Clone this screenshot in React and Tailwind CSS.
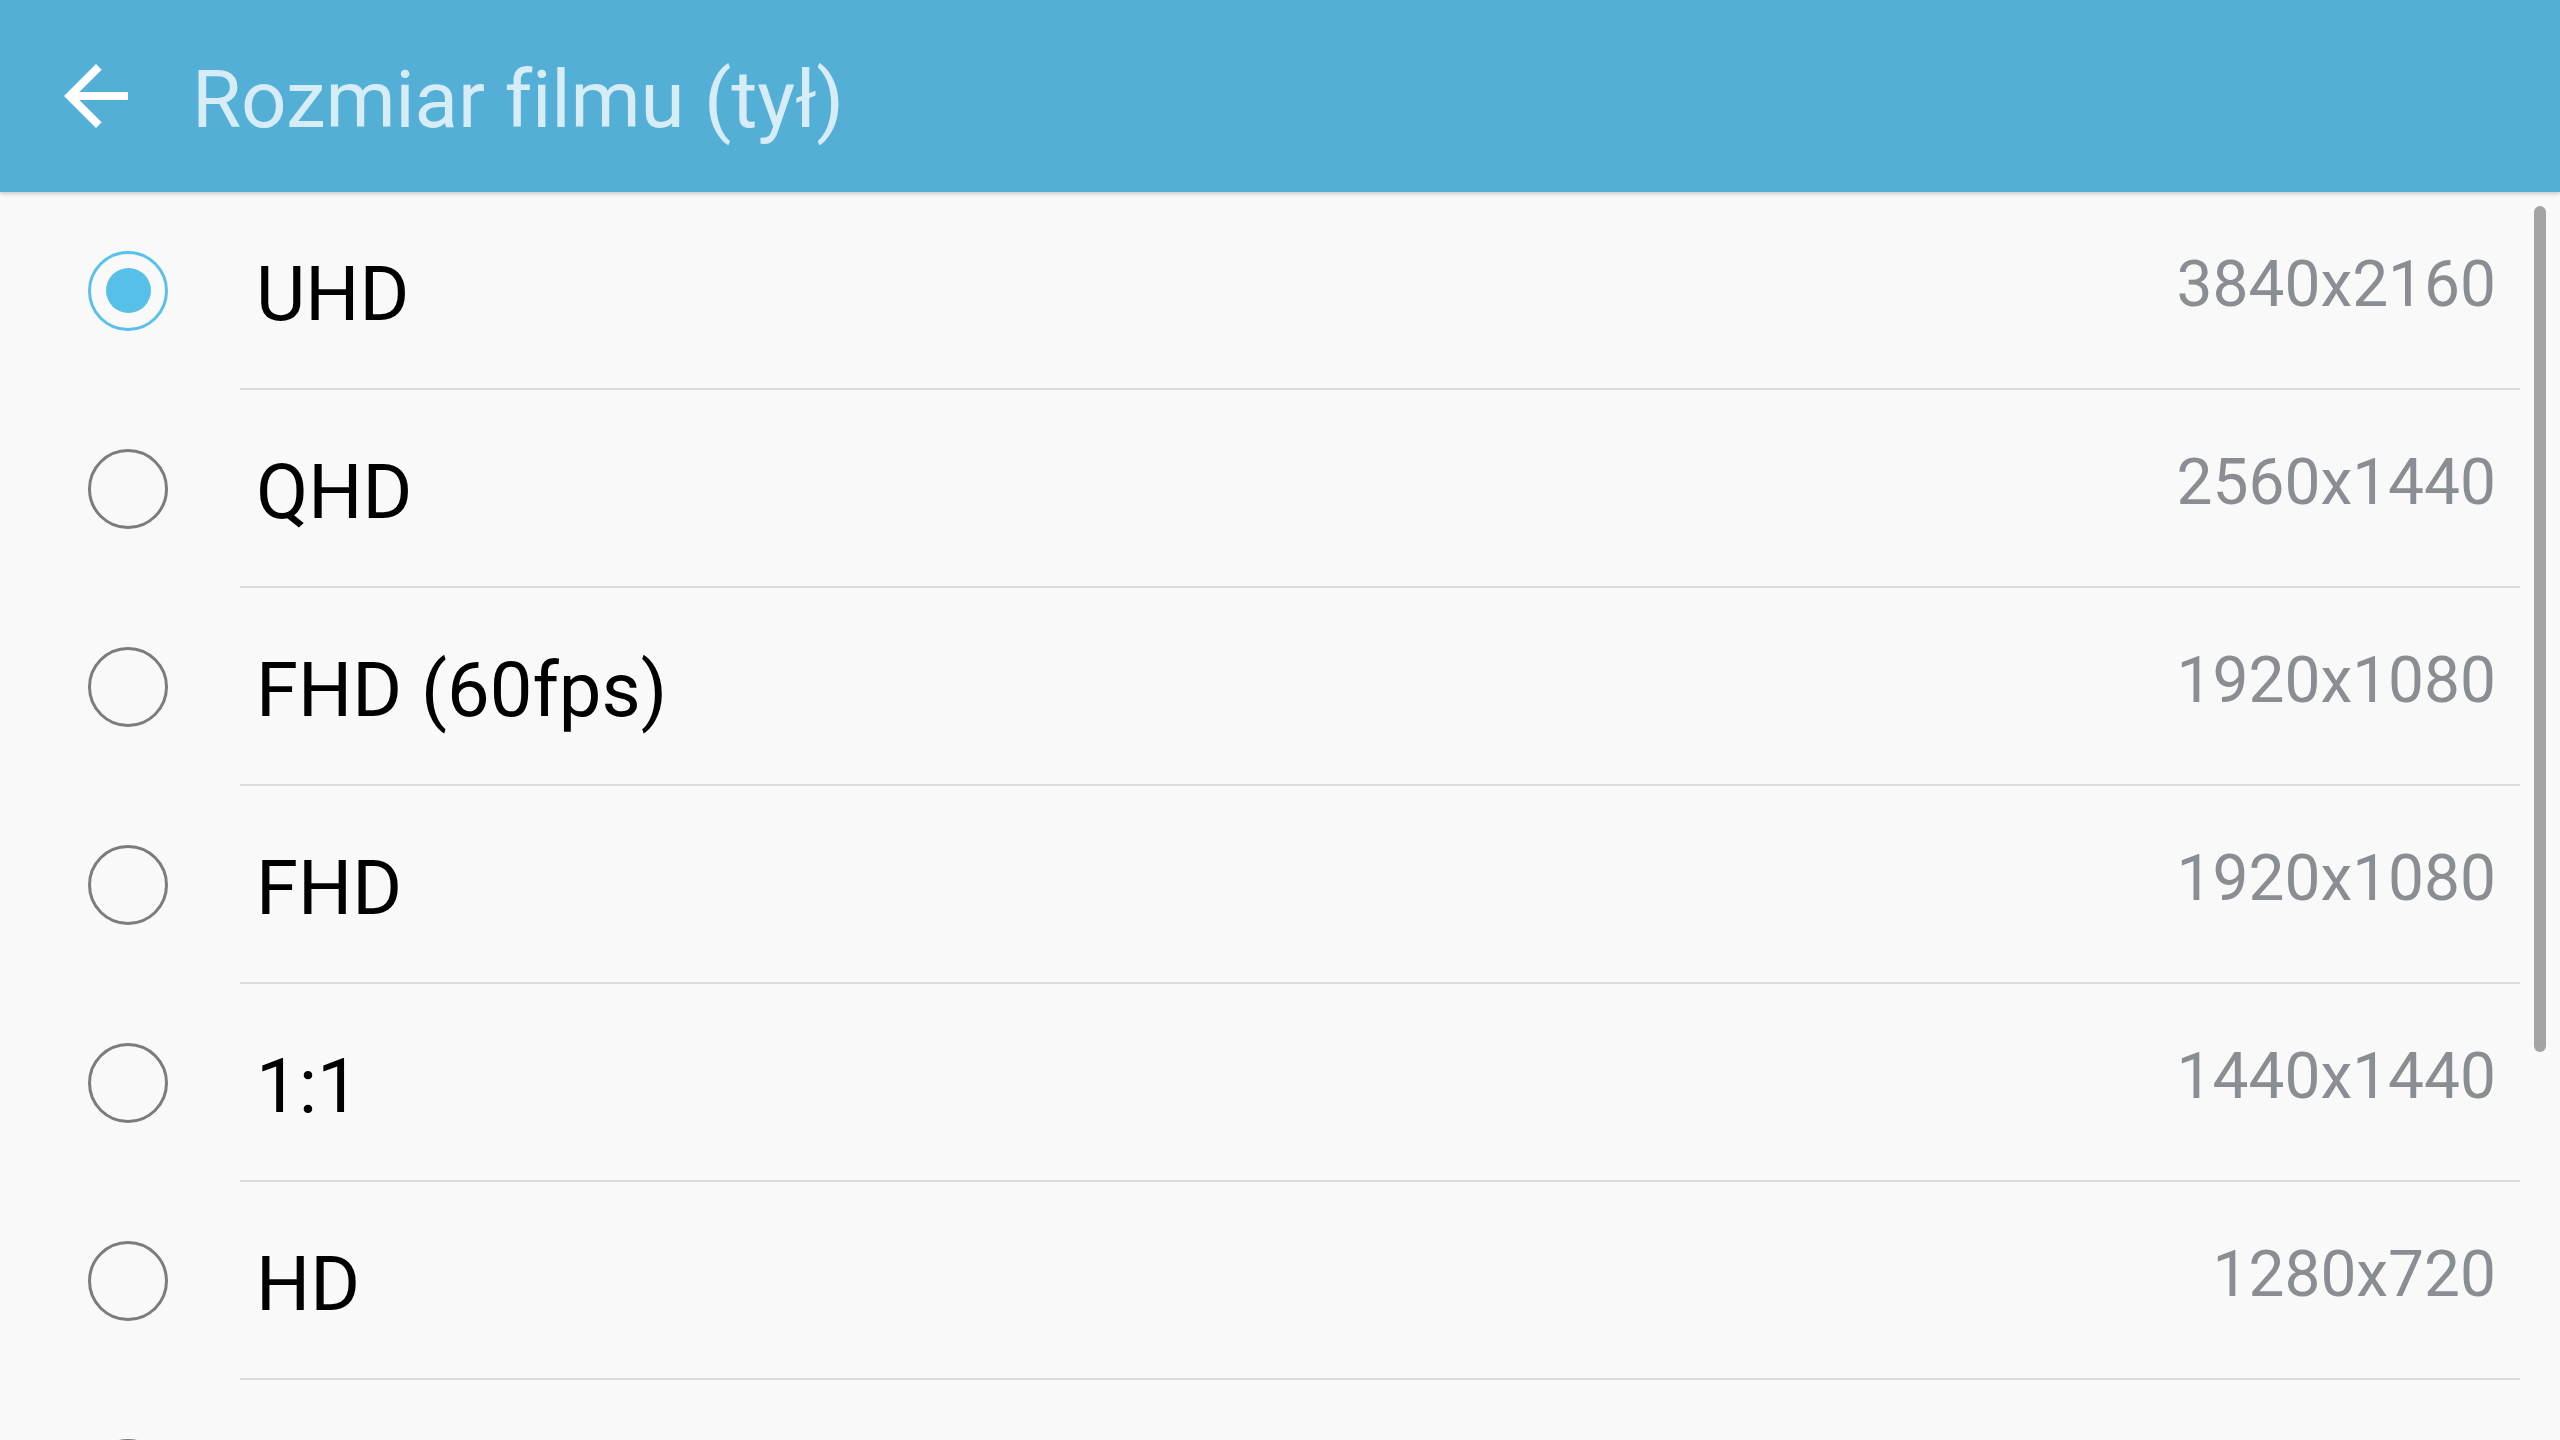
import React from "react";

const rows = [
  { label: "UHD", value: "3840x2160", selected: true },
  { label: "QHD", value: "2560x1440" },
  { label: "FHD (60fps)", value: "1920x1080" },
  { label: "FHD", value: "1920x1080" },
  { label: "1:1", value: "1440x1440" },
  { label: "HD", value: "1280x720" },
  { label: "", value: "" },
];

function Radio({ selected }) {
  if (selected) {
    return (
      <div className="w-[80px] h-[80px] rounded-full border-[3px] border-[#5bc1e8] flex items-center justify-center">
        <div className="w-[45px] h-[45px] rounded-full bg-[#56c0e8]" />
      </div>
    );
  }
  return <div className="w-[80px] h-[80px] rounded-full border-[3px] border-[#7c7c7c]" />;
}

export default function App() {
  return (
    <div
      className="w-[2560px] h-[1440px] overflow-hidden bg-[#f9f9f9] flex flex-col"
      style={{ fontFamily: "Roboto, 'Noto Sans', sans-serif" }}
    >
      <header className="relative z-10 h-[192px] shrink-0 bg-[#53afd6] flex items-center shadow-[0_2px_4px_rgba(0,0,0,0.18)]">
        <svg
          className="ml-[64px] w-[64px] h-[64px]"
          viewBox="4 4 16 16"
          fill="#ffffff"
        >
          <path d="M20 11H7.83l5.59-5.59L12 4l-8 8 8 8 1.41-1.41L7.83 13H20v-2z" />
        </svg>
        <h1 className="ml-[64px] pt-[8px] text-[80px] leading-none font-normal text-[#d6ecf6] tracking-[-0.2px]">
          Rozmiar filmu (tył)
        </h1>
      </header>
      <div className="relative flex-1 overflow-hidden">
        <ul className="flex flex-col">
          {rows.map((r, i) => (
            <li key={i} className="flex h-[198px] shrink-0">
              <div className="w-[240px] shrink-0 flex items-center pl-[88px] pb-[1px]">
                <Radio selected={r.selected} />
              </div>
              <div className="flex-1 mr-[40px] flex items-center justify-between border-b-2 border-[#dddddd]">
                <span className="pl-[16px] pt-[8px] text-[76px] leading-none text-[#000000]">
                  {r.label}
                </span>
                <span className="pr-[24px] pb-[10px] text-[64px] leading-none text-[#8a8d91]">
                  {r.value}
                </span>
              </div>
            </li>
          ))}
        </ul>
        <div className="absolute right-[14px] top-[14px] w-[12px] h-[846px] rounded-full bg-[#a4a4a4]" />
      </div>
    </div>
  );
}
